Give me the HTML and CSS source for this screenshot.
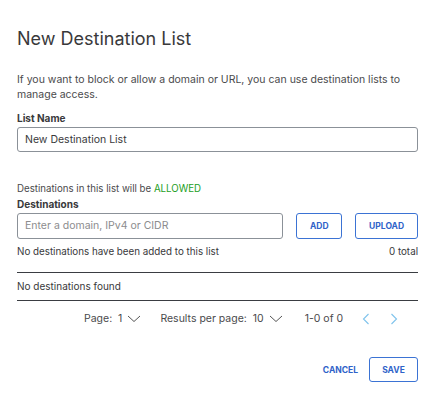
FILE: index.html
```html
<!DOCTYPE html>
<html>
<head>
<meta charset="utf-8">
<link rel="stylesheet" href="styles.css">
</head>
<body>
<div class="dialog">
  <h1 class="title">New Destination List</h1>
  <p class="intro">If you want to block or allow a domain or URL, you can use destination lists to manage access.</p>
  <label class="label">List Name</label>
  <div class="input name-input">New Destination List</div>

  <div class="status">Destinations in this list will be <span class="allowed">ALLOWED</span></div>
  <label class="label label-dest">Destinations</label>
  <div class="add-row">
    <div class="input dest-input placeholder">Enter a domain, IPv4 or CIDR</div>
    <button class="btn btn-add">ADD</button>
    <button class="btn btn-upload">UPLOAD</button>
  </div>
  <div class="summary">
    <span>No destinations have been added to this list</span>
    <span>0 total</span>
  </div>
  <div class="table">
    <div class="empty">No destinations found</div>
  </div>
  <div class="pager">
    <span class="pg-item">Page:&nbsp; 1 <svg class="chev" width="14" height="8" viewBox="0 0 14 8"><path d="M1 1l6 5.5L13 1" fill="none" stroke="#555" stroke-width="1"/></svg></span>
    <span class="pg-item pg-results">Results per page:&nbsp; 10 <svg class="chev" width="14" height="8" viewBox="0 0 14 8"><path d="M1 1l6 5.5L13 1" fill="none" stroke="#555" stroke-width="1"/></svg></span>
    <span class="pg-item">1-0 of 0</span>
    <span class="arrows">
      <svg width="8" height="12" viewBox="0 0 8 12"><path d="M6.5 1L1.5 6l5 5" fill="none" stroke="#7fc3ec" stroke-width="1.1"/></svg>
      <svg width="8" height="12" viewBox="0 0 8 12"><path d="M1.5 1l5 5-5 5" fill="none" stroke="#7fc3ec" stroke-width="1.1"/></svg>
    </span>
  </div>
  <div class="footer">
    <button class="link-btn">CANCEL</button>
    <button class="btn btn-save">SAVE</button>
  </div>
</div>
</body>
</html>
```

FILE: styles.css
```css
* { box-sizing: border-box; }
html, body { margin: 0; padding: 0; background: #fff; }
body { font-family: Inter, "Noto Sans", sans-serif; color: #39393b; }

.dialog {
  width: 438px;
  padding: 27px 20px 0 17px;
  display: flex;
  flex-direction: column;
}

.title {
  margin: 0;
  font-size: 18px;
  line-height: 24px;
  font-weight: 400;
  color: #39393b;
}

.intro {
  margin: 21px 0 0;
  font-size: 10.5px;
  line-height: 15px;
  color: #4a4a4c;
}

.label {
  display: block;
  margin-top: 9px;
  font-size: 10px;
  line-height: 14px;
  font-weight: 700;
  color: #39393b;
}

.input {
  height: 25px;
  border: 1px solid #8b9198;
  border-radius: 3px;
  padding: 0 7px;
  font-size: 10.5px;
  line-height: 23px;
  color: #39393b;
}
.name-input { margin-top: 2px; }

.status {
  margin-top: 30px;
  font-size: 9.7px;
  line-height: 14px;
  color: #4a4a4c;
}
.allowed { color: #1d9e1d; }

.label-dest { margin-top: 1px; }

.add-row {
  display: flex;
  gap: 13px;
  margin-top: 2px;
}
.dest-input {
  width: 267px;
  height: 26px;
  line-height: 24px;
  color: #8c8c8e;
}

.btn {
  height: 26px;
  background: #fff;
  border: 1px solid #3b73d4;
  border-radius: 3px;
  color: #2f63c9;
  font-family: Inter, "Noto Sans", sans-serif;
  font-weight: 700;
  font-size: 8.5px;
  padding: 0;
  cursor: pointer;
}
.btn-add { width: 46px; }
.btn-upload { width: 63px; }

.summary {
  display: flex;
  justify-content: space-between;
  margin-top: 6px;
  font-size: 9.8px;
  line-height: 14px;
  color: #39393b;
}

.table {
  margin-top: 13px;
  border-top: 1.5px solid #3a3d42;
  border-bottom: 1.5px solid #3a3d42;
  height: 29px;
}
.empty {
  padding-top: 6px;
  font-size: 10px;
  line-height: 14px;
  color: #39393b;
}

.pager {
  display: flex;
  align-items: center;
  margin-top: 11px;
  padding-left: 67px;
  font-size: 10.5px;
  line-height: 14px;
  color: #4a4a4c;
}
.pg-item { display: inline-flex; align-items: center; margin-right: 19px; }
.pg-results { margin-right: 22px; }
.chev { margin-left: 5px; }
.arrows { display: inline-flex; gap: 20px; margin-left: 0; }

.footer {
  display: flex;
  justify-content: flex-end;
  align-items: center;
  gap: 11px;
  margin-top: 31px;
}
.link-btn {
  background: none;
  border: 0;
  padding: 0;
  color: #2f63c9;
  font-family: Inter, "Noto Sans", sans-serif;
  font-weight: 700;
  font-size: 8.5px;
}
.btn-save { width: 49px; height: 25px; }
```
